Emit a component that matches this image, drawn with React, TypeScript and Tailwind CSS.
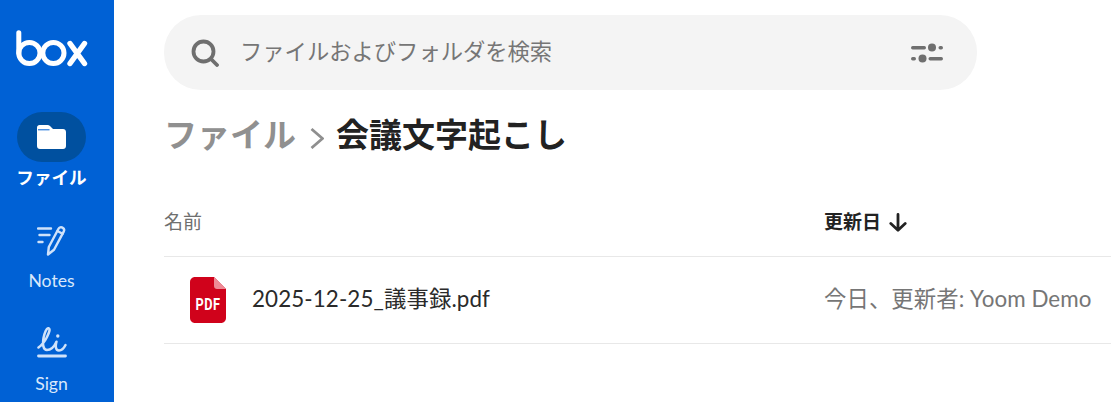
const FONT = "font-['Lato','Noto_Sans_CJK_JP',sans-serif]";

function BoxLogo() {
  return (
    <svg width="72" height="38" viewBox="0 0 72 38" fill="none" stroke="#fff" strokeWidth="5" strokeLinecap="round" aria-hidden="true">
      <path d="M2.800 2.800V23" />
      <circle cx="13.400" cy="23" r="10.600" />
      <circle cx="37.400" cy="23" r="10.600" />
      <path d="M54 13.500L68.500 33.500M68.500 13.500L54 33.500" strokeWidth="5.400" />
    </svg>
  );
}

function FolderIcon() {
  return (
    <svg width="29" height="24" viewBox="0 0 29 24" fill="#fff" aria-hidden="true">
      <path d="M2.500 0h8c1 0 1.800.4 2.500 1l2.500 2.400c.4.4.8.6 1.400.6H26c1.700 0 3 1.300 3 3v14c0 1.700-1.300 3-3 3H3c-1.700 0-3-1.300-3-3V2.500C0 1.100 1.100 0 2.500 0z" />
      <path d="M1 4.800h11.500" stroke="#0061d5" strokeWidth="1" fill="none" />
    </svg>
  );
}

function NotesIcon() {
  return (
    <svg width="30" height="32" viewBox="0 0 30 32" fill="none" stroke="#cfe2fa" strokeWidth="2.400" strokeLinecap="round" strokeLinejoin="round" aria-hidden="true">
      <path d="M1 3.500h13M2.500 10h10M1.500 17h4" />
      <path d="M11 29.500l.8-7.500L21.500 3.800c.8-1.500 2.600-2 4-1.200 1.500.8 2 2.500 1.200 4L17 24.800z" />
      <path d="M20.500 6l5 2.800" />
    </svg>
  );
}

function SignIcon() {
  return (
    <svg width="30" height="32" viewBox="0 0 30 32" fill="none" stroke="#cfe2fa" strokeWidth="2.500" strokeLinecap="round" strokeLinejoin="round" aria-hidden="true">
      <path d="M1.500 20.500C5 18 8 14 10 10C12 6 13.500 2 11.800 1.300C9.500.5 7.500 6 6.500 11C5.500 17 6 23 10 23C14 23 17.500 19 19.500 14.700C18.500 18 18 23.500 22 23.500C25 23.500 27 21 28.500 18" />
      <circle cx="20.800" cy="9" r="1.700" fill="#cfe2fa" stroke="none" />
      <path d="M1.500 29h27" strokeWidth="2.800" />
    </svg>
  );
}

function PdfIcon() {
  return (
    <div className="relative h-[46px] w-[36px]">
      <svg width="36" height="46" viewBox="0 0 36 46" aria-hidden="true" className="absolute inset-0">
        <path d="M5 0h19l12 12v29c0 2.800-2.200 5-5 5H5c-2.800 0-5-2.200-5-5V5c0-2.800 2.200-5 5-5z" fill="#d0021b" />
        <path d="M24 0l12 12H27c-1.700 0-3-1.300-3-3z" fill="#ee8a95" />
      </svg>
      <span className="absolute left-0 right-0 top-[18px] scale-x-[0.8] text-center text-[16px] leading-[20px] font-bold tracking-[0.5px] text-white font-['Roboto',sans-serif]">PDF</span>
    </div>
  );
}

function SearchIcon() {
  return (
    <svg width="28" height="28" viewBox="0 0 28 28" fill="none" stroke="#6f6f6f" strokeWidth="3.800" strokeLinecap="round" aria-hidden="true">
      <circle cx="12.500" cy="12.500" r="10" />
      <path d="M20.500 20.500l5.500 5.500" />
    </svg>
  );
}

function FilterIcon() {
  return (
    <svg width="32" height="20" viewBox="0 0 32 20" fill="#6f6f6f" aria-hidden="true">
      <rect x="0" y="3" width="15" height="3.400" rx="1.700" />
      <circle cx="21" cy="4.500" r="4" />
      <rect x="27.500" y="3" width="4.500" height="3.400" rx="1.700" />
      <rect x="0" y="14" width="5" height="3.400" rx="1.700" />
      <circle cx="11.500" cy="15.500" r="4" />
      <rect x="17.500" y="14" width="14.500" height="3.400" rx="1.700" />
    </svg>
  );
}

function ChevronIcon() {
  return (
    <svg width="14" height="22" viewBox="0 0 14 22" fill="none" stroke="#8f8f8f" strokeWidth="2.800" aria-hidden="true">
      <path d="M1.500 2l11 9.500-11 9.500" />
    </svg>
  );
}

function ArrowDown() {
  return (
    <svg width="18" height="19" viewBox="0 0 18 19" fill="none" stroke="#222" strokeWidth="2.800" strokeLinecap="round" strokeLinejoin="round" aria-hidden="true">
      <path d="M9 1.500v15.500M1.800 10.500L9 17.200l7.200-6.700" />
    </svg>
  );
}

export default function App() {
  return (
    <div className={`flex h-[402px] w-[1111px] overflow-hidden bg-white ${FONT}`}>
      {/* Sidebar */}
      <aside className="flex w-[114px] shrink-0 flex-col items-center bg-[#0061d5] pr-[11px]">
        <div className="mt-[30px] h-[38px]">
          <BoxLogo />
        </div>
        <div className="mt-[44px] flex h-[50px] w-[69px] items-center justify-center rounded-full bg-[#00509f]">
          <FolderIcon />
        </div>
        <span className="mt-[5px] text-[17.6px] leading-[22px] font-bold text-white">ファイル</span>
        <div className="mt-[36px] flex h-[32px] items-center justify-center">
          <NotesIcon />
        </div>
        <span className="mt-[13px] text-[17.6px] leading-[22px] text-[#d9e8fb]">Notes</span>
        <div className="mt-[35px] flex h-[32px] items-center justify-center">
          <SignIcon />
        </div>
        <span className="mt-[14px] text-[17.6px] leading-[22px] text-[#d9e8fb]">Sign</span>
      </aside>

      {/* Main */}
      <main className="min-w-0 flex-1 pl-[50px] pt-[15px]">
        <div className="flex h-[75px] w-[813px] items-center rounded-[37px] bg-[#f4f4f4] pl-[27px] pr-[34px]">
          <SearchIcon />
          <span className="ml-[21px] mt-[-2px] flex-1 text-[22.3px] leading-[28px] text-[#767676]">ファイルおよびフォルダを検索</span>
          <FilterIcon />
        </div>

        <div className="mt-[23px] flex h-[42px] items-center">
          <span className="text-[33px] leading-[42px] font-bold text-[#909090]">ファイル</span>
          <span className="ml-[14px] mt-[8px]"><ChevronIcon /></span>
          <span className="ml-[12px] text-[33px] leading-[42px] font-bold text-[#222]">会議文字起こし</span>
        </div>

        <div className="mt-[48px] flex h-[54px] items-start border-b border-[#e8e8e8] pt-[7px]">
          <span className="w-[660px] text-[19px] leading-[24px] text-[#6f6f6f]">名前</span>
          <span className="flex items-center gap-[8px] text-[19px] leading-[24px] font-bold text-[#222]">
            更新日 <ArrowDown />
          </span>
        </div>

        <div className="flex h-[87px] items-center border-b border-[#e8e8e8]">
          <div className="ml-[26px] mr-[26px]"><PdfIcon /></div>
          <span className="w-[572px] mt-[-2px] text-[22.4px] leading-[28px] tracking-[0.1px] text-[#2a2a2a]">2025-12-25_議事録.pdf</span>
          <span className="mt-[-2px] whitespace-nowrap text-[22.4px] leading-[28px] tracking-[0.05px] text-[#767676]">今日、更新者: Yoom Demo</span>
        </div>
      </main>
    </div>
  );
}
